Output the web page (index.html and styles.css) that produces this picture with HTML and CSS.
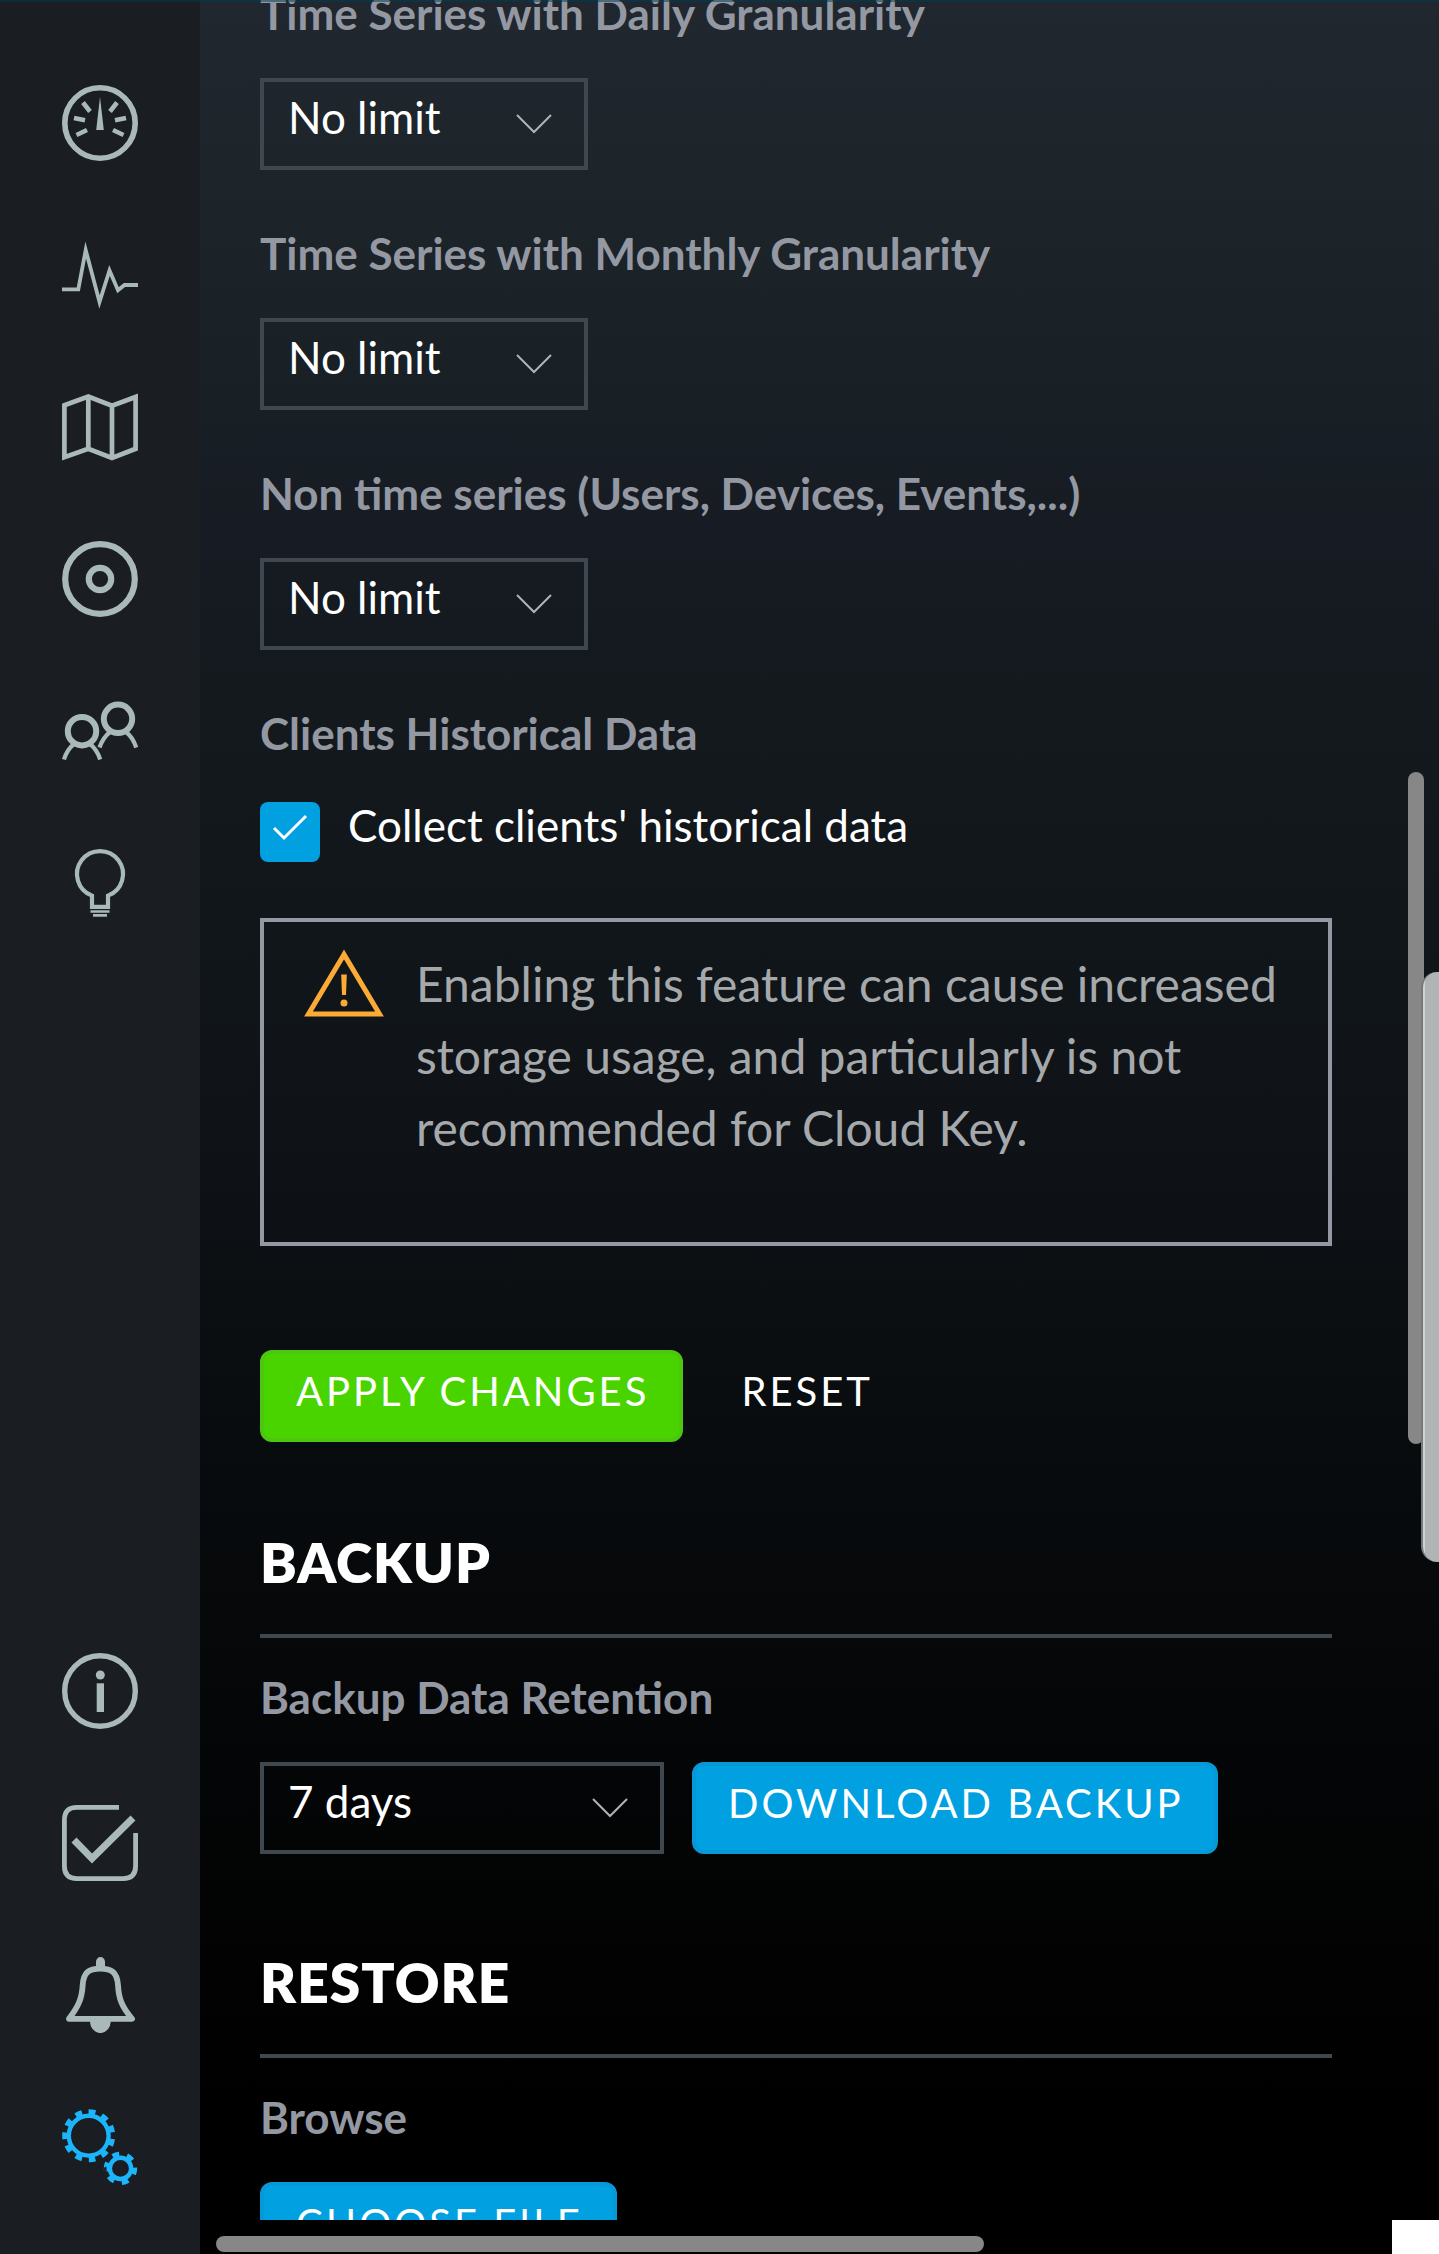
FILE: index.html
```html
<!DOCTYPE html>
<html lang="en">
<head>
<meta charset="utf-8">
<meta name="viewport" content="width=device-width, initial-scale=1">
<title>Settings</title>
<link rel="stylesheet" href="styles.css">
</head>
<body>
<div class="app">
  <nav class="sidebar" aria-label="Main">
    <div class="nav-group">
      <a class="nav-item" href="#dashboard" aria-label="Dashboard">
        <svg class="icon" viewBox="0 0 76 76"><circle cx="38" cy="38" r="35.2" stroke-width="5.6"/><path stroke-width="4.6" d="M21 17.5 28 26.5M55 17.5 48 26.5M12 33 23 35.3M64 33 53 35.3M14.5 50 25 45M61.5 50 51 45"/><path class="fill" d="M38 12 41.8 45H34.2Z"/></svg>
      </a>
      <a class="nav-item" href="#activity" aria-label="Activity">
        <svg class="icon" viewBox="0 0 76 76"><path stroke-width="3.8" stroke-miterlimit="12" d="M0 52.3H16.3L23.7 13 37.5 65 47.5 33.5 56 53.3 62.5 48H76"/></svg>
      </a>
      <a class="nav-item" href="#map" aria-label="Map">
        <svg class="icon" viewBox="0 0 76 76"><path stroke-width="4.7" d="M2.4 16.3 26.3 7.5 50 16.8 73.6 8V59.8L50 69 26.3 59.8 2.4 68.2ZM26.3 7.5V59.8M50 16.8V69"/></svg>
      </a>
      <a class="nav-item" href="#devices" aria-label="Devices">
        <svg class="icon" viewBox="0 0 76 76"><circle cx="38" cy="38" r="34.8" stroke-width="6.2"/><circle cx="38" cy="38" r="11.2" stroke-width="6.2"/></svg>
      </a>
      <a class="nav-item" href="#clients" aria-label="Clients">
        <svg class="icon" viewBox="0 0 76 76"><circle cx="20" cy="38.2" r="14.2" stroke-width="6"/><circle cx="56" cy="25.8" r="14.2" stroke-width="6"/><path stroke-width="4.2" d="M12 51Q5 56.5 2 66.5M28 51Q35 56.5 38.2 66.5M48 39Q41 44.5 37.5 54.5M64 39Q71 44.5 74.2 54.5"/></svg>
      </a>
      <a class="nav-item" href="#insights" aria-label="Insights">
        <svg class="icon" viewBox="0 0 76 76"><path stroke-width="4.2" d="M30 61.8V50.6A23 23 0 1 1 46 50.6V61.8Z"/><path stroke-width="2.7" d="M28.5 66.5H47.5M31 70.3H45"/></svg>
      </a>
    </div>
    <div class="nav-group">
      <a class="nav-item" href="#info" aria-label="Information">
        <svg class="icon" viewBox="0 0 76 76"><circle cx="38" cy="38" r="35.3" stroke-width="5.4"/><circle class="fill" cx="38.3" cy="22" r="4.5"/><path class="fill" d="M34.7 30.3H42V59H34.7Z"/></svg>
      </a>
      <a class="nav-item" href="#tasks" aria-label="Tasks">
        <svg class="icon" viewBox="0 0 76 76"><path stroke-width="4.8" d="M57 2.4H15Q2.4 2.4 2.4 15V61Q2.4 73.6 15 73.6H61Q73.6 73.6 73.6 61V28"/><path stroke-width="7" d="M12 35 30 53.5 71 13"/></svg>
      </a>
      <a class="nav-item" href="#alerts" aria-label="Alerts">
        <svg class="icon" viewBox="0 0 76 76"><path stroke-width="5.8" stroke-linejoin="round" d="M7 61.8C16 50 20 42 20.7 28 21.5 15 27 11.6 38.3 11.6S55 15 56 28C56.7 42 60 50 70 61.8Z"/><path class="fill" d="M34 10V5A4.5 5 0 0 1 43 5V10ZM28 64H48.7A10.3 12 0 0 1 28 64Z"/></svg>
      </a>
      <a class="nav-item nav-item--active" href="#settings" aria-label="Settings">
        <svg class="icon" viewBox="0 0 76 76"><circle cx="26.7" cy="26.7" r="19.9" stroke-width="4.4"/><circle cx="26.7" cy="26.7" r="23.4" stroke-width="6.2" pathLength="110" stroke-dasharray="5 5" transform="rotate(171.8 26.7 26.7)"/><circle cx="58.5" cy="59.4" r="10.6" stroke-width="4.4"/><circle cx="58.5" cy="59.4" r="14" stroke-width="5.4" pathLength="60" stroke-dasharray="4.6 5.4" transform="rotate(-3 58.5 59.4)"/></svg>
      </a>
    </div>
  </nav>

  <div class="panel">
    <main class="scroller">
      <div class="field">
        <label class="label" for="daily">Time Series with Daily Granularity</label>
        <div class="select">
          <select class="select-input" id="daily"><option>No limit</option></select>
          <svg class="chevron" viewBox="0 0 36 20"><path d="M1 1 18 18 35 1"/></svg>
        </div>
      </div>
      <div class="field">
        <label class="label" for="monthly">Time Series with Monthly Granularity</label>
        <div class="select">
          <select class="select-input" id="monthly"><option>No limit</option></select>
          <svg class="chevron" viewBox="0 0 36 20"><path d="M1 1 18 18 35 1"/></svg>
        </div>
      </div>
      <div class="field">
        <label class="label" for="other">Non time series (Users, Devices, Events,...)</label>
        <div class="select">
          <select class="select-input" id="other"><option>No limit</option></select>
          <svg class="chevron" viewBox="0 0 36 20"><path d="M1 1 18 18 35 1"/></svg>
        </div>
      </div>
      <div class="field field--check">
        <span class="label">Clients Historical Data</span>
        <div class="check">
          <span class="check-box">
            <input class="check-input" type="checkbox" id="collect" checked>
            <svg class="check-mark" viewBox="0 0 60 60"><path d="M14 26 24 36 46 14"/></svg>
          </span>
          <label class="check-label" for="collect">Collect clients' historical data</label>
        </div>
      </div>
      <div class="notice">
        <svg class="notice-icon" viewBox="0 0 80 70"><path class="warn-line" d="M40 6.5 4.500 66H75.500Z"/><path class="warn-fill" d="M37.200 26.5H42.800L42 47H38Z"/><circle class="warn-fill" cx="40" cy="55" r="3.5"/></svg>
        <p class="notice-text">Enabling this feature can cause increased storage usage, and particularly is not recommended for Cloud Key.</p>
      </div>
      <div class="actions">
        <button class="button button--green" type="button">APPLY CHANGES</button>
        <button class="button button--plain" type="button">RESET</button>
      </div>

      <h2 class="heading">BACKUP</h2>
      <div class="field">
        <label class="label" for="retention">Backup Data Retention</label>
        <div class="row">
          <div class="select select--wide">
            <select class="select-input" id="retention"><option>7 days</option></select>
            <svg class="chevron" viewBox="0 0 36 20"><path d="M1 1 18 18 35 1"/></svg>
          </div>
          <button class="button button--blue" type="button">DOWNLOAD BACKUP</button>
        </div>
      </div>

      <h2 class="heading heading--later">RESTORE</h2>
      <div class="field">
        <span class="label">Browse</span>
        <div class="row">
          <button class="button button--blue" type="button">CHOOSE FILE</button>
        </div>
      </div>
    </main>
    <div class="bottom-strip">
      <div class="track-x"><div class="thumb-x"></div></div>
      <div class="corner"></div>
    </div>
    <div class="thumb-y"></div>
    <div class="edge-handle"></div>
  </div>
  <div class="top-line"></div>
</div>
</body>
</html>
```
FILE: styles.css
```css
* {
  box-sizing: border-box;
}

body {
  margin: 0;
  background: #000;
  color: #fff;
  font-family: Lato, "Open Sans", sans-serif;
  font-size: 44px;
}

.app {
  position: relative;
  display: flex;
  height: 100vh;
  overflow: hidden;
}

.sidebar {
  flex: 0 0 200px;
  display: flex;
  flex-direction: column;
  justify-content: space-between;
  padding: 47px 0 31px;
  background: #1a1d21;
}

.nav-group {
  display: flex;
  flex-direction: column;
}

.nav-item {
  display: flex;
  align-items: center;
  justify-content: center;
  height: 152px;
  color: #a9b9b9;
}

.nav-item--active {
  color: #1cb4fb;
}

.icon {
  width: 76px;
  height: 76px;
  fill: none;
  stroke: currentColor;
}

.icon .fill {
  fill: currentColor;
  stroke: none;
}

.panel {
  position: relative;
  flex: 1;
  min-width: 0;
  display: flex;
  flex-direction: column;
  background: linear-gradient(#20272e 0%, #1c2329 10%, #181f25 18%, #171b23 24%, #13191d 32%, #0f1317 50%, #090d10 62%, #050607 76%, #000 94%);
}

.scroller {
  flex: 1;
  min-height: 0;
  overflow: hidden;
  padding: 0 107px 0 60px;
}

.field {
  display: flex;
  flex-direction: column;
  gap: 38px;
  margin-bottom: 56px;
}

.field:first-child {
  margin-top: -14px;
}

.field--check {
  gap: 42px;
}

.label {
  color: #9498a2;
  font-weight: 700;
  line-height: 54px;
}

.row {
  display: flex;
  gap: 28px;
}

.select {
  position: relative;
  width: 328px;
}

.select--wide {
  width: 404px;
}

.select-input {
  appearance: none;
  display: block;
  width: 100%;
  height: 92px;
  padding: 0 80px 14px 24px;
  border: 4px solid #3e484e;
  border-radius: 0;
  background: transparent;
  color: #fff;
  font: inherit;
}

.chevron {
  position: absolute;
  top: 36px;
  right: 36px;
  width: 36px;
  height: 20px;
  fill: none;
  stroke: #b0b2b4;
  stroke-width: 2;
  pointer-events: none;
}

.check {
  display: flex;
  gap: 28px;
}

.check-box {
  position: relative;
  width: 60px;
  height: 60px;
}

.check-input {
  appearance: none;
  display: block;
  width: 60px;
  height: 60px;
  margin: 0;
  border-radius: 8px;
  background: #00a0e1;
}

.check-mark {
  position: absolute;
  inset: 0;
  fill: none;
  stroke: #fff;
  stroke-width: 3;
  pointer-events: none;
}

.check-label {
  line-height: 46px;
}

.notice {
  display: flex;
  align-items: flex-start;
  gap: 32px;
  padding: 26px 40px 78px;
  border: 4px solid #9498a2;
}

.notice-icon {
  flex: none;
  width: 80px;
  height: 70px;
}

.warn-line {
  fill: none;
  stroke: #fbaa36;
  stroke-width: 5;
}

.warn-fill {
  fill: #fbaa36;
}

.notice-text {
  margin: 0;
  color: #a6a9ab;
  font-size: 48px;
  line-height: 72px;
}

.actions {
  display: flex;
  gap: 58px;
  margin-top: 104px;
}

.button {
  height: 92px;
  padding: 0 30px 10px 32px;
  border: 4px solid transparent;
  border-radius: 12px;
  background: none;
  color: #fff;
  font: inherit;
  font-size: 40px;
  letter-spacing: 3px;
  white-space: nowrap;
}

.button--green {
  border-color: #4bc70f;
  background: #49d400;
}

.button--blue {
  border-color: #0699d8;
  background: #00a0e1;
}

.button--plain {
  padding-left: 0;
  padding-right: 0;
  border-width: 4px 0;
}

.heading {
  margin: 84px 0 32px;
  padding-bottom: 36px;
  border-bottom: 4px solid #3e484e;
  font-size: 55px;
  font-weight: 800;
  line-height: 72px;
  letter-spacing: 1px;
}

.heading--later {
  margin-top: 92px;
}

.bottom-strip {
  flex: none;
  display: flex;
  height: 34px;
}

.track-x {
  flex: 1;
  padding: 16px 0 2px 16px;
}

.thumb-x {
  width: 768px;
  height: 16px;
  border-radius: 8px;
  background: #878787;
}

.corner {
  width: 47px;
  background: #fff;
}

.thumb-y {
  position: absolute;
  top: 772px;
  right: 15px;
  width: 16px;
  height: 672px;
  border-radius: 8px;
  background: #878787;
}

.edge-handle {
  position: absolute;
  top: 972px;
  right: 0;
  width: 18px;
  height: 590px;
  border-left: 2px solid #777a7a;
  border-radius: 16px 0 0 16px;
  background: linear-gradient(90deg, #d0d2d2 2px, #b1b4b5 2px);
}

.top-line {
  position: absolute;
  inset: 0 0 auto;
  height: 2px;
  background: rgba(0, 60, 80, 0.5);
}
```
